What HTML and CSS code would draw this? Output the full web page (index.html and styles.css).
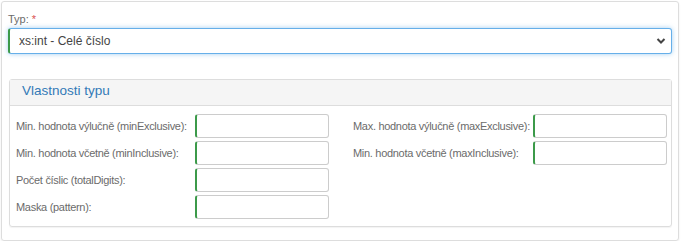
FILE: index.html
```html
<!DOCTYPE html>
<html lang="cs">
<head>
    <meta charset="UTF-8">
    <title>Typ</title>
    <link rel="stylesheet" href="styles.css">
</head>
<body>
    <div class="box">
        <label class="field-label">Typ: <span class="req">*</span></label>
        <div class="select-wrap">
            <select class="type-select">
                <option>xs:int - Celé číslo</option>
            </select>
            <svg class="chevron" width="10" height="8" viewBox="0 0 10 8"><path d="M1.5 2 L5 5.5 L8.5 2" fill="none" stroke="#444" stroke-width="2"/></svg>
        </div>

        <div class="panel">
            <div class="panel-heading">Vlastnosti typu</div>
            <div class="panel-body">
                <div class="prop-row">
                    <span class="prop-label">Min. hodnota výlučně (minExclusive):</span>
                    <input type="text" class="prop-input">
                    <span class="prop-label">Max. hodnota výlučně (maxExclusive):</span>
                    <input type="text" class="prop-input">
                </div>
                <div class="prop-row">
                    <span class="prop-label">Min. hodnota včetně (minInclusive):</span>
                    <input type="text" class="prop-input">
                    <span class="prop-label">Min. hodnota včetně (maxInclusive):</span>
                    <input type="text" class="prop-input">
                </div>
                <div class="prop-row">
                    <span class="prop-label">Počet číslic (totalDigits):</span>
                    <input type="text" class="prop-input">
                </div>
                <div class="prop-row">
                    <span class="prop-label">Maska (pattern):</span>
                    <input type="text" class="prop-input">
                </div>
            </div>
        </div>
    </div>
</body>
</html>
```

FILE: styles.css
```css
body {
    margin: 0;
    background: #fff;
    font-family: Arial, "Liberation Sans", sans-serif;
    color: #555;
}
.box {
    margin: 1px 3px 0 1px;
    height: 240px;
    box-sizing: border-box;
    border: 1px solid #ddd;
    border-radius: 3px;
    box-shadow: 0 1px 2px rgba(0, 0, 0, 0.08);
    padding: 10px 6px 0 6px;
}
.field-label {
    display: block;
    font-size: 11px;
    line-height: 14px;
    color: #6b6b6b;
    margin-bottom: 2px;
}
.req {
    color: #d9534f;
}
.select-wrap {
    position: relative;
}
.type-select {
    display: block;
    width: 100%;
    height: 26px;
    box-sizing: border-box;
    border: 1px solid #66afe9;
    border-left: 2px solid #3c9a4a;
    border-radius: 3px;
    padding: 0 0 0 9px;
    font-family: Arial, "Liberation Sans", sans-serif;
    font-size: 12px;
    color: #444;
    background: #fff;
    appearance: none;
    -webkit-appearance: none;
    box-shadow: 0 0 5px rgba(102, 175, 233, 0.6);
    outline: none;
}
.chevron {
    position: absolute;
    right: 6px;
    top: 9px;
    pointer-events: none;
}
.panel {
    margin: 25px 0 0 1px;
    border: 1px solid #ddd;
    border-radius: 3px;
    box-shadow: 0 1px 1px rgba(0, 0, 0, 0.05);
}
.panel-heading {
    background: #f5f5f5;
    border-bottom: 1px solid #ddd;
    color: #337ab7;
    font-size: 13.5px;
    height: 25px;
    line-height: 22px;
    padding-left: 12px;
}
.panel-body {
    padding: 8px 0 7px 6px;
}
.prop-row {
    display: grid;
    grid-template-columns: 179px 134px 24px 180px 134px;
    align-items: center;
    margin-bottom: 3px;
}
.prop-row:last-child {
    margin-bottom: 0;
}
.prop-label {
    font-size: 11px;
    letter-spacing: -0.3px;
    white-space: nowrap;
    color: #6b6b6b;
}
.prop-input {
    width: 134px;
    height: 24px;
    box-sizing: border-box;
    border: 1px solid #ccc;
    border-left: 2px solid #3c9a4a;
    border-radius: 3px;
    padding: 2px 6px;
    font-size: 11px;
    outline: none;
}
.prop-row .prop-label:nth-child(3) {
    grid-column: 4;
}
```
